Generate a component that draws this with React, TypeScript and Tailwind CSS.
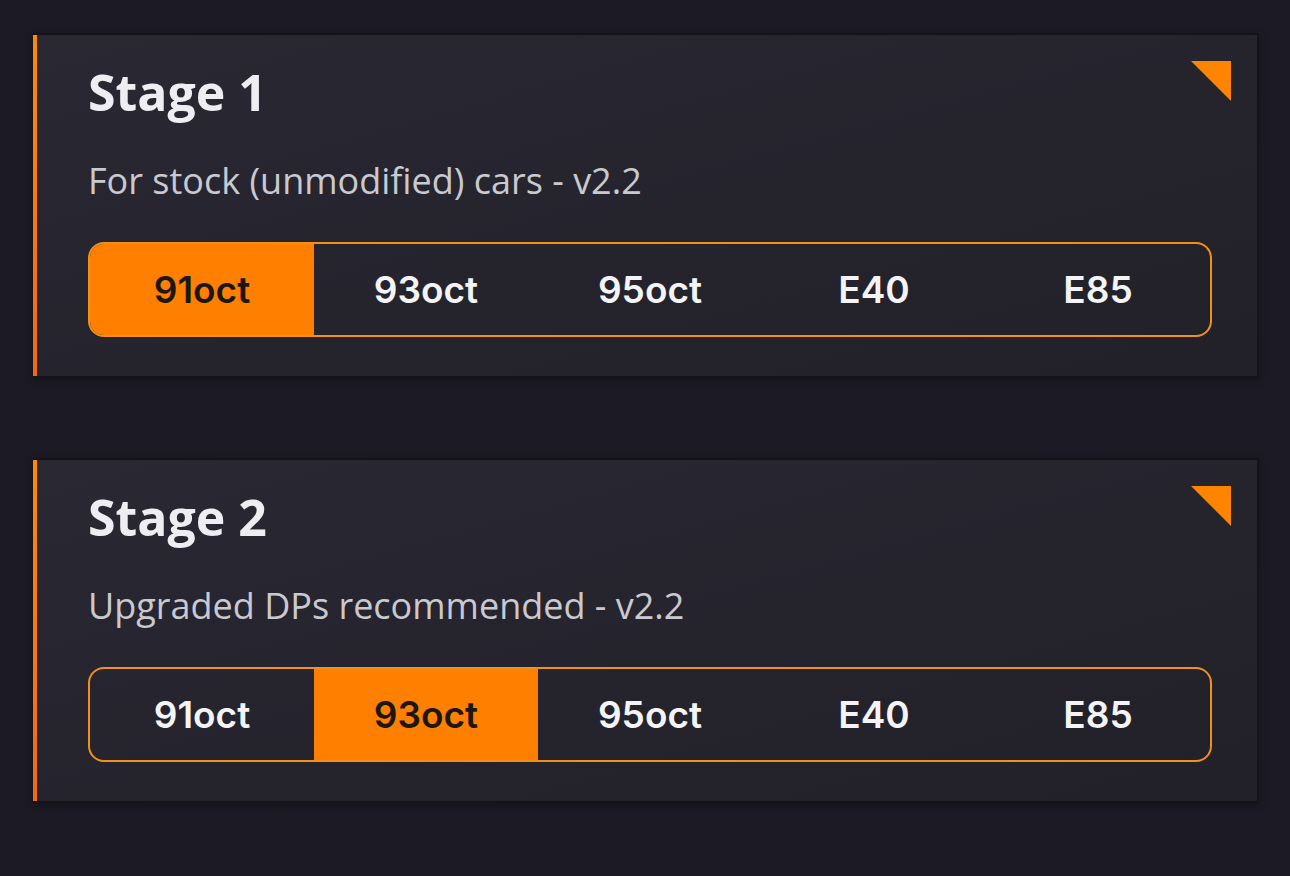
const stages = [
  { name: "Stage 1", desc: "For stock (unmodified) cars - v2.2", active: 0 },
  { name: "Stage 2", desc: "Upgraded DPs recommended - v2.2", active: 1 },
];

const fuels = ["91oct", "93oct", "95oct", "E40", "E85"];

function StageCard({ name, desc, active }: { name: string; desc: string; active: number }) {
  return (
    <div className="relative flex flex-col border-2 border-l-0 border-[#141319] bg-gradient-to-br from-[#292833] to-[#222129] shadow-[0_2px_6px_rgba(0,0,0,0.35)]">
      <div className="flex">
        <div className="w-[4px] shrink-0 bg-gradient-to-b from-[#ff8a00] to-[#f26a0c]" />
        <div className="flex flex-1 flex-col pl-[51px] pr-[45px] pt-[23px] pb-[39px]">
          <h2 className="text-[50px] font-bold leading-[68px] text-[#eeeef2] [font-family:'Open_Sans',sans-serif]">{name}</h2>
          <p className="mt-[30px] text-[36px] leading-[49px] text-[#c9c9cf] [font-family:'Open_Sans',sans-serif]">{desc}</p>
          <div className="mt-[37px] grid h-[95px] grid-cols-5 overflow-hidden rounded-[16px] border-2 border-[#f2901c]">
            {fuels.map((f, i) => (
              <button
                key={f}
                className={
                  "flex items-center justify-center text-[37px] font-semibold [font-family:Inter,sans-serif] " +
                  (i === active ? "bg-[#ff8000] text-[#1b1713]" : "text-[#f4f4f6]")
                }
              >
                {f}
              </button>
            ))}
          </div>
        </div>
      </div>
      <svg className="absolute right-[26px] top-[26px]" width="40" height="40" viewBox="0 0 40 40">
        <polygon points="0,0 40,0 40,40" fill="#ff8500" />
      </svg>
    </div>
  );
}

export default function App() {
  return (
    <div className="min-h-[876px] w-full bg-[#1c1b25] pl-[33px] pr-[31px] pt-[33px]">
      <div className="flex flex-col gap-[80px]">
        {stages.map((s) => (
          <StageCard key={s.name} {...s} />
        ))}
      </div>
    </div>
  );
}
